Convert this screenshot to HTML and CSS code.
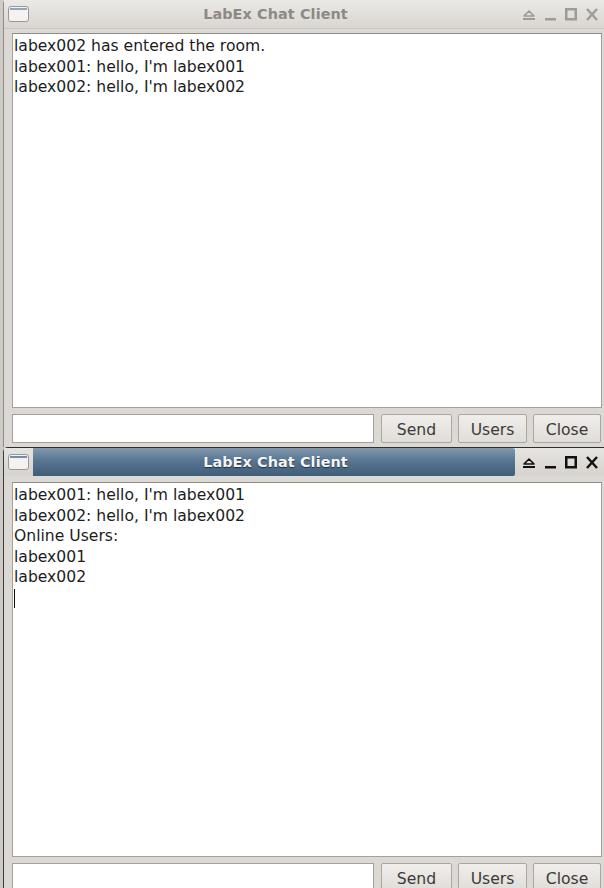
FILE: index.html
```html
<!DOCTYPE html>
<html>
<head>
<meta charset="utf-8">
<link rel="stylesheet" href="styles.css">
</head>
<body>
<div class="window inactive">
  <div class="titlebar">
    <div class="tb-icon">
      <svg width="21" height="16" viewBox="0 0 21 16"><rect x="0.5" y="0.5" width="20" height="15" rx="2.5" fill="#f4f3f1" stroke="#9a9792"/><rect x="2" y="2" width="17" height="2" fill="#8fa6c0"/></svg>
    </div>
    <div class="tb-title">LabEx Chat Client</div>
    <div class="tb-buttons">
      <svg class="b-eject" width="14" height="13" viewBox="0 0 14 13"><path d="M2 8 L7 3 L12 8 Z" fill="none" stroke="currentColor" stroke-width="1.6" stroke-linejoin="round"/><rect x="1" y="10" width="12" height="2" fill="currentColor"/></svg>
      <svg class="b-min" width="11" height="13" viewBox="0 0 11 13"><rect x="0" y="10" width="11" height="2.5" fill="currentColor"/></svg>
      <svg class="b-max" width="12" height="13" viewBox="0 0 12 13"><rect x="1.25" y="1.25" width="9.5" height="10" fill="none" stroke="currentColor" stroke-width="2.5"/></svg>
      <svg class="b-close" width="12" height="13" viewBox="0 0 12 13"><path d="M1 1 L11 12 M11 1 L1 12" stroke="currentColor" stroke-width="2.4" fill="none"/></svg>
    </div>
  </div>
  <div class="content">
    <div class="textarea">
      <div class="line">labex002 has entered the room.</div>
      <div class="line">labex001: hello, I'm labex001</div>
      <div class="line">labex002: hello, I'm labex002</div>
    </div>
    <div class="inputrow">
      <div class="field"></div>
      <button class="btn btn-send">Send</button>
      <button class="btn btn-users">Users</button>
      <button class="btn btn-close">Close</button>
    </div>
  </div>
</div>
<div class="window active">
  <div class="titlebar">
    <div class="tb-icon">
      <svg width="21" height="16" viewBox="0 0 21 16"><rect x="0.5" y="0.5" width="20" height="15" rx="2.5" fill="#f4f3f1" stroke="#9a9792"/><rect x="2" y="2" width="17" height="2" fill="#6d8db3"/></svg>
    </div>
    <div class="tb-title">LabEx Chat Client</div>
    <div class="tb-buttons">
      <svg class="b-eject" width="14" height="13" viewBox="0 0 14 13"><path d="M2 8 L7 3 L12 8 Z" fill="none" stroke="currentColor" stroke-width="1.6" stroke-linejoin="round"/><rect x="1" y="10" width="12" height="2" fill="currentColor"/></svg>
      <svg class="b-min" width="11" height="13" viewBox="0 0 11 13"><rect x="0" y="10" width="11" height="2.5" fill="currentColor"/></svg>
      <svg class="b-max" width="12" height="13" viewBox="0 0 12 13"><rect x="1.25" y="1.25" width="9.5" height="10" fill="none" stroke="currentColor" stroke-width="2.5"/></svg>
      <svg class="b-close" width="12" height="13" viewBox="0 0 12 13"><path d="M1 1 L11 12 M11 1 L1 12" stroke="currentColor" stroke-width="2.4" fill="none"/></svg>
    </div>
  </div>
  <div class="content">
    <div class="textarea">
      <div class="line">labex001: hello, I'm labex001</div>
      <div class="line">labex002: hello, I'm labex002</div>
      <div class="line">Online Users:</div>
      <div class="line">labex001</div>
      <div class="line">labex002</div>
      <div class="line"><span class="caret"></span></div>
    </div>
    <div class="inputrow">
      <div class="field"></div>
      <button class="btn btn-send">Send</button>
      <button class="btn btn-users">Users</button>
      <button class="btn btn-close">Close</button>
    </div>
  </div>
</div>
</body>
</html>
```

FILE: styles.css
```css
html, body {
  margin: 0;
  padding: 0;
  width: 604px;
  height: 888px;
  overflow: hidden;
  background: #cfccc7;
  font-family: "DejaVu Sans", sans-serif;
}

.window {
  margin-left: 3px;
  width: 601px;
  border-left: 1px solid #8e8a85;
  background: #dcd9d4;
  box-sizing: border-box;
  display: flex;
  flex-direction: column;
}

.window.inactive {
  height: 447px;
  border-top-left-radius: 4px;
}

.window.active {
  height: 449px;
  border-top: 1px solid #2e2e2e;
  border-left-color: #3a3a3a;
  border-top-left-radius: 5px;
}

.titlebar {
  height: 28px;
  display: flex;
  align-items: stretch;
  flex: none;
}

.inactive .titlebar {
  background: linear-gradient(#ebe9e6, #d9d6d1);
  border-bottom: 1px solid #c9c6c1;
}

.active .titlebar {
  background: linear-gradient(#e6e4e1, #d6d3ce);
}

.tb-icon {
  width: 25px;
  padding-left: 4px;
  display: flex;
  align-items: center;
  flex: none;
}

.tb-title {
  flex: 1;
  display: flex;
  align-items: center;
  justify-content: center;
  font-weight: bold;
  font-size: 14.4px;
  letter-spacing: 0.1px;
  padding-left: 3px;
}

.inactive .tb-title {
  color: #8c8a87;
}

.active .tb-title {
  color: #f4f6f8;
  background: linear-gradient(#8299ad, #587592 45%, #3f5c79);
  text-shadow: 0 1px 1px rgba(0, 0, 0, 0.55);
  border-top-right-radius: 2px;
  border-bottom-right-radius: 2px;
}

.tb-buttons {
  width: 89px;
  flex: none;
  display: flex;
  align-items: center;
  padding-left: 7px;
  box-sizing: border-box;
}

.inactive .tb-buttons { color: #9d9b98; }
.active .tb-buttons { color: #111; }

.b-eject { margin-right: 9px; }
.b-min { margin-right: 9px; }
.b-max { margin-right: 9px; }

.content {
  flex: 1;
  display: flex;
  flex-direction: column;
  padding: 4px 2px 0 8px;
  min-height: 0;
}

.active .content {
  padding-top: 6px;
}

.textarea {
  flex: 1;
  background: #fff;
  border: 1px solid #a4a09b;
  border-top-color: #8f8b86;
  padding: 2px 1px 0 1px;
  font-size: 15.6px;
  line-height: 20.6px;
  color: #1c1c1c;
  min-height: 0;
}

.line {
  height: 20.6px;
  white-space: pre;
}

.caret {
  display: inline-block;
  width: 1px;
  height: 19px;
  background: #111;
  vertical-align: -5px;
}

.inputrow {
  display: flex;
  gap: 6px;
  margin-top: 6px;
  height: 29px;
  flex: none;
  margin-bottom: 4px;
}

.field {
  width: 362px;
  background: #fff;
  border: 1px solid #a4a09b;
  box-sizing: border-box;
}

.btn {
  margin: 0;
  height: 29px;
  box-sizing: border-box;
  border: 1px solid #aaa6a1;
  border-radius: 2px;
  background: linear-gradient(#f0eeeb, #e0ddd8);
  font-family: "DejaVu Sans", sans-serif;
  font-size: 15.6px;
  color: #3a3a3a;
  padding: 0;
  padding-top: 2px;
}

.btn-send { width: 71px; margin-left: 1px; }
.btn-users { width: 69px; }
.btn-close { width: 68px; }
```
